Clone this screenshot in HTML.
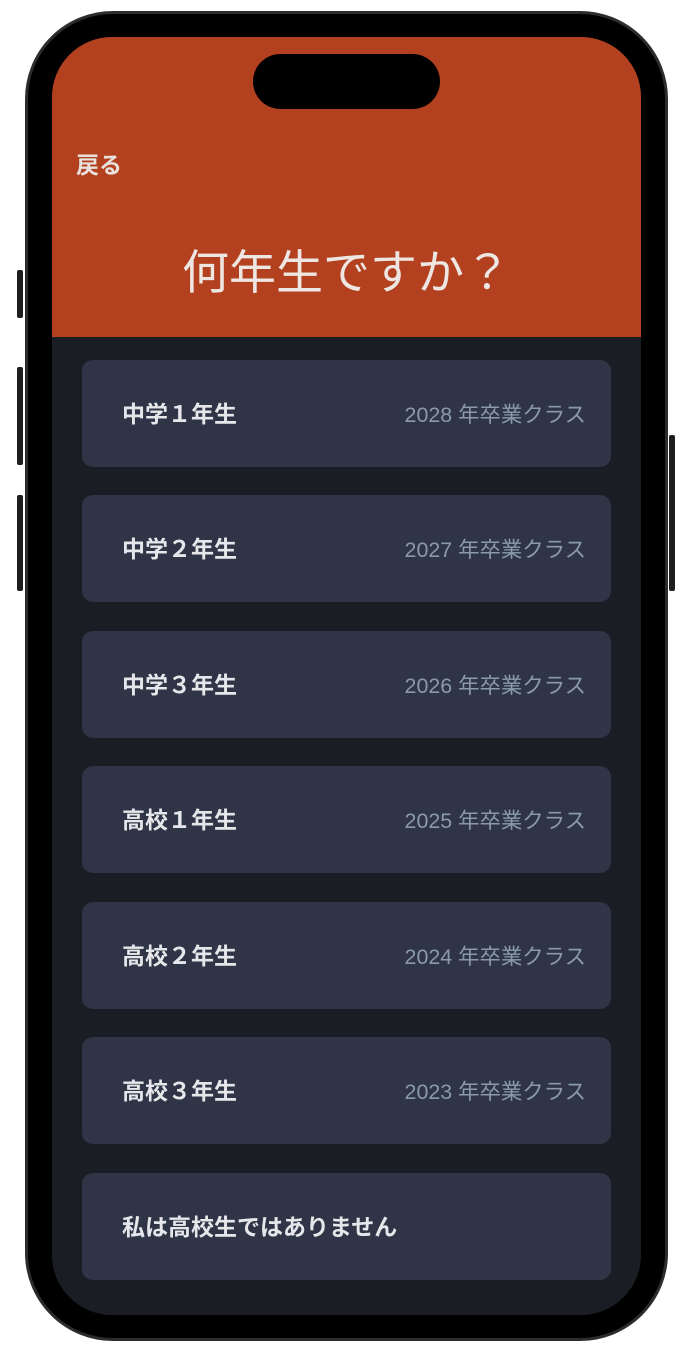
<!DOCTYPE html>
<html><head><meta charset="utf-8"><style>
*{margin:0;padding:0;box-sizing:border-box}
body{width:682px;height:1352px;background:#fff;position:relative;overflow:hidden;font-family:"Liberation Sans","Noto Sans CJK JP",sans-serif}
.btn{position:absolute;background:#1e1e1e;border-radius:2px}
.outer{position:absolute;left:25px;top:11px;width:643px;height:1330px;border-radius:88px;background:#000;border:3px solid #2c2c2c}
.screen{position:absolute;left:52px;top:37px;width:589px;height:1278px;border-radius:60px;overflow:hidden;background:#1A1E24}
.hdr{position:absolute;left:0;top:0;width:100%;height:300px;background:#B3411F}
.island{position:absolute;left:201px;top:17px;width:187px;height:55px;border-radius:28px;background:#000}
.back{position:absolute;left:24px;top:109px;color:#E8E2DF;font-size:23px;font-weight:bold}
.title{position:absolute;left:0;width:100%;top:197px;text-align:center;color:#EDE6E2;font-size:47px}
.card{position:absolute;left:30px;width:529px;height:107px;border-radius:11px;background:#2F3546}
.card .l{position:absolute;left:40px;top:35px;color:#E6E7EA;font-size:23px;font-weight:bold}
.card .r{position:absolute;right:25px;top:38px;color:#8A9AAB;font-size:21.4px}
</style></head><body>
<div class="btn" style="left:17px;top:270px;width:6px;height:48px"></div>
<div class="btn" style="left:17px;top:367px;width:6px;height:98px"></div>
<div class="btn" style="left:17px;top:495px;width:6px;height:96px"></div>
<div class="btn" style="left:669px;top:435px;width:6px;height:156px"></div>
<div class="outer"></div>
<div class="screen">
<div class="hdr"></div>
<div class="island"></div>
<div class="back">戻る</div>
<div class="title">何年生ですか？</div>
<div class="card" style="top:323px"><span class="l">中学１年生</span><span class="r">2028 年卒業クラス</span></div>
<div class="card" style="top:458px"><span class="l">中学２年生</span><span class="r">2027 年卒業クラス</span></div>
<div class="card" style="top:594px"><span class="l">中学３年生</span><span class="r">2026 年卒業クラス</span></div>
<div class="card" style="top:729px"><span class="l">高校１年生</span><span class="r">2025 年卒業クラス</span></div>
<div class="card" style="top:865px"><span class="l">高校２年生</span><span class="r">2024 年卒業クラス</span></div>
<div class="card" style="top:1000px"><span class="l">高校３年生</span><span class="r">2023 年卒業クラス</span></div>
<div class="card" style="top:1136px"><span class="l">私は高校生ではありません</span></div>
</div>
</body></html>
